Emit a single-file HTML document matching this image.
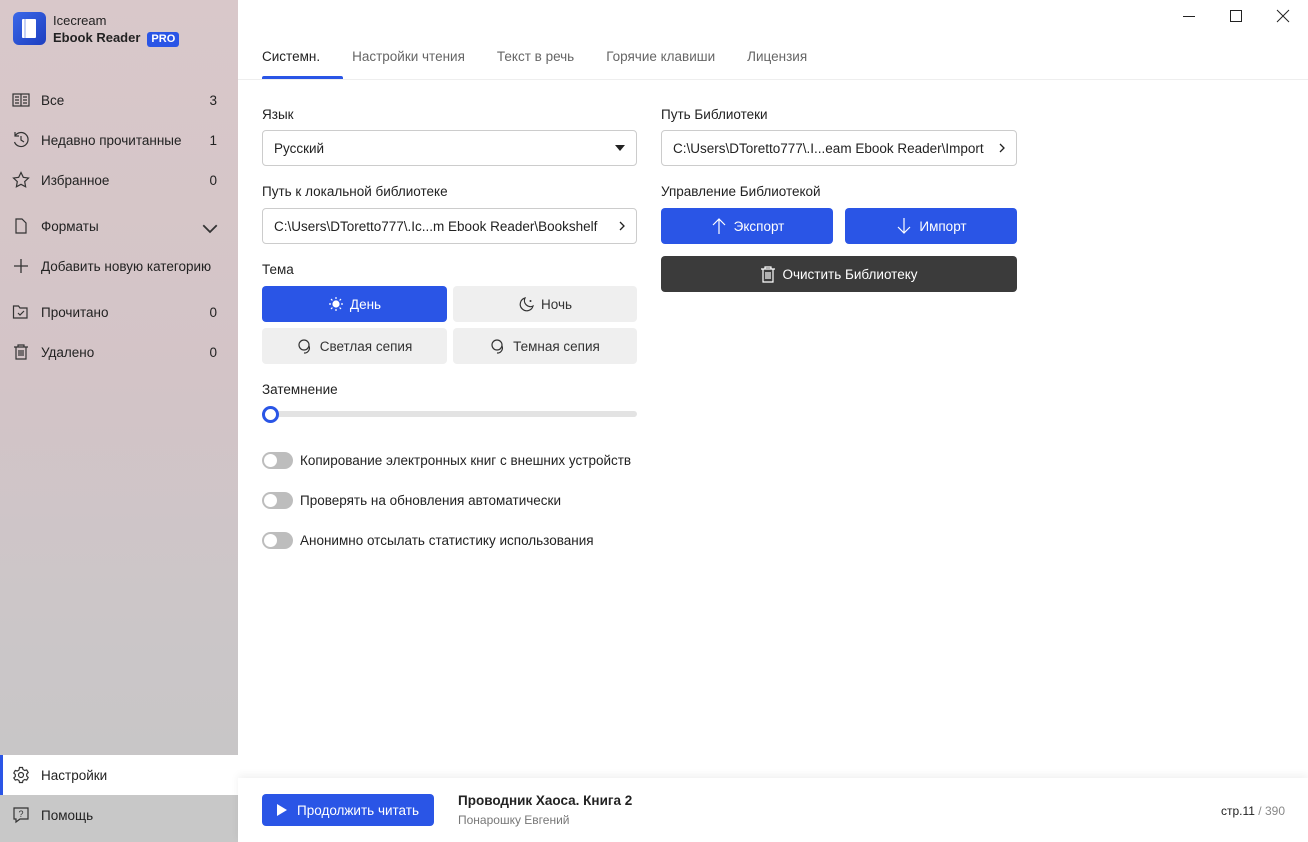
<!DOCTYPE html>
<html><head><meta charset="utf-8"><style>
*{box-sizing:border-box;margin:0;padding:0}
body{width:1308px;height:842px;overflow:hidden;font-family:"Liberation Sans","Noto Sans CJK SC",sans-serif;font-size:13.5px;color:#222;background:#fff;position:relative}
.side{position:absolute;left:0;top:0;width:238px;height:842px;background:linear-gradient(180deg,#d9c8ca 0%,#d3c4c7 45%,#cbc6c8 75%,#c6c6c6 100%)}
.logo{position:absolute;left:13px;top:12px;width:33px;height:33px;border-radius:6px;background:linear-gradient(135deg,#3a68e8,#1d3fc0)}
.logo i{position:absolute;left:9px;top:7px;width:14px;height:19px;background:#fff;border-radius:1px}
.logo b{position:absolute;left:11px;top:7px;width:2px;height:19px;background:#c5d2f5}
.brand{position:absolute;left:53px;top:12px;font-size:13px;line-height:17px}
.pro{display:inline-block;background:#2a55e6;color:#fff;font-weight:bold;font-size:11px;padding:1px 4px;border-radius:3px;margin-left:7px;line-height:13px}
.it{position:absolute;left:0;width:238px;height:40px;display:flex;align-items:center;padding-left:12px;font-size:13.5px}
.it svg{width:18px;height:18px;margin-right:11px;flex:none}
.it .n{position:absolute;right:21px}
.main{position:absolute;left:238px;top:0;right:0;bottom:0}
.tabs{position:absolute;left:24px;top:49px;display:flex;font-size:13.5px;color:#666}
.tabs span{margin-right:32px}
.tabs .a{color:#222}
.ul{position:absolute;left:24px;top:76px;width:81px;height:3px;background:#2a55e6;border-radius:2px 2px 0 0}
.hr{position:absolute;left:0;right:0;top:79px;height:1px;background:#eee}
.lbl{position:absolute;font-size:13.5px}
.box{position:absolute;height:36px;border:1px solid #ccc;border-radius:4px;display:flex;align-items:center;padding-left:11px;font-size:13.5px}
.box .r{position:absolute;right:9px;top:10px}
.btn{position:absolute;height:36px;border-radius:4px;display:flex;align-items:center;justify-content:center;font-size:13.5px}
.btn svg{margin-right:6px}
.blue{background:#2a55e6;color:#fff}
.gray{background:#efefef;color:#333}
.tg{position:absolute;left:24px;width:31px;height:17px;border-radius:9px;background:#bdbdbd}
.tg:after{content:"";position:absolute;left:2px;top:2px;width:13px;height:13px;border-radius:50%;background:#fff}
.tl{position:absolute;left:62px;font-size:13.5px}
.win{position:absolute;top:9px;font-size:14px;color:#222}
</style></head><body>
<div class="side">
<div class="logo"><i></i><b></b></div>
<div class="brand">Icecream<br><b style="font-weight:bold">Ebook Reader</b><span class="pro">PRO</span></div>
<div class="it" style="top:80px"><svg viewBox="0 0 18 18" fill="none" stroke="#333" stroke-width="1.2"><rect x="1" y="3" width="16" height="12"/><line x1="9" y1="3" x2="9" y2="15"/><path d="M3 6h4M3 9h4M3 12h4M11 6h4M11 9h4M11 12h4"/></svg>Все<span class="n">3</span></div>
<div class="it" style="top:120px"><svg viewBox="0 0 18 18" fill="none" stroke="#333" stroke-width="1.2"><path d="M3 5A7 7 0 1 1 2.5 11"/><path d="M3 1v4h4"/><path d="M9 5v4l3 2"/></svg>Недавно прочитанные<span class="n">1</span></div>
<div class="it" style="top:160px"><svg viewBox="0 0 18 18" fill="none" stroke="#333" stroke-width="1.2"><path d="M9 1.5l2.3 4.8 5.2.7-3.8 3.6.9 5.2L9 13.3l-4.6 2.5.9-5.2L1.5 7l5.2-.7z"/></svg>Избранное<span class="n">0</span></div>
<div class="it" style="top:206px"><svg viewBox="0 0 18 18" fill="none" stroke="#333" stroke-width="1.2"><path d="M4 2h6l4 4v10H4z"/></svg>Форматы<span class="n" style="right:19px;top:14px"><svg viewBox="0 0 12 12" width="12" height="12" fill="none" stroke="#333" stroke-width="1.2" style="margin:0"><path d="M1.5 3.5l4.5 4.5 4.5-4.5"/></svg></span></div>
<div class="it" style="top:246px"><svg viewBox="0 0 18 18" fill="none" stroke="#333" stroke-width="1.3"><path d="M9 2v14M2 9h14"/></svg>Добавить новую категорию</div>
<div class="it" style="top:292px"><svg viewBox="0 0 18 18" fill="none" stroke="#333" stroke-width="1.2"><path d="M1.5 3h5l1.5 2h7v10h-13.5z"/><path d="M6 10l2 2 4-4"/></svg>Прочитано<span class="n">0</span></div>
<div class="it" style="top:332px"><svg viewBox="0 0 18 18" fill="none" stroke="#333" stroke-width="1.2"><path d="M2 4h14M6 4V2h6v2M4 4v12h10V4M7 7v6M9 7v6M11 7v6"/></svg>Удалено<span class="n">0</span></div>
<div class="it" style="top:755px;background:#fff;border-left:3px solid #2a55e6;padding-left:9px"><svg viewBox="0 0 18 18" fill="none" stroke="#333" stroke-width="1.2"><circle cx="9" cy="9" r="2.5"/><path d="M7.5 1.5h3l.5 2 1.7 1 2-.6 1.5 2.6-1.5 1.5v2l1.5 1.5-1.5 2.6-2-.6-1.7 1-.5 2h-3l-.5-2-1.7-1-2 .6L1.8 12l1.5-1.5v-2L1.8 7l1.5-2.6 2 .6 1.7-1z"/></svg>Настройки</div>
<div style="position:absolute;left:0;top:795px;width:238px;height:47px;background:#c8c8c8"></div>
<div class="it" style="top:795px"><svg viewBox="0 0 18 18" fill="none" stroke="#333" stroke-width="1.2"><path d="M2 2h14v11H8l-4 3v-3H2z"/><text x="9" y="11" font-size="9" text-anchor="middle" fill="#333" stroke="none" font-family="Liberation Sans">?</text></svg>Помощь</div>
</div>
<div class="main">
<div class="win" style="left:944px"><svg width="14" height="14"><path d="M1 7.5h12" stroke="#222"/></svg></div>
<div class="win" style="left:991px"><svg width="14" height="14"><rect x="1.5" y="1.5" width="11" height="11" fill="none" stroke="#222"/></svg></div>
<div class="win" style="left:1038px"><svg width="14" height="14"><path d="M1 1l12 12M13 1L1 13" stroke="#222"/></svg></div>
<div class="tabs"><span class="a">Системн.</span><span>Настройки чтения</span><span>Текст в речь</span><span>Горячие клавиши</span><span>Лицензия</span></div>
<div class="ul"></div><div class="hr"></div>

<div class="lbl" style="left:24px;top:107px">Язык</div>
<div class="box" style="left:24px;top:130px;width:375px">Русский<span class="r" style="top:14px;right:11px;border-left:5px solid transparent;border-right:5px solid transparent;border-top:6px solid #222"></span></div>
<div class="lbl" style="left:24px;top:184px">Путь к локальной библиотеке</div>
<div class="box" style="left:24px;top:208px;width:375px">C:\Users\DToretto777\.Ic...m Ebook Reader\Bookshelf<span class="r"><svg width="10" height="14"><path d="M3 3l4 4-4 4" fill="none" stroke="#222" stroke-width="1.3"/></svg></span></div>
<div class="lbl" style="left:24px;top:262px">Тема</div>
<div class="btn blue" style="left:24px;top:286px;width:185px"><svg width="16" height="16" viewBox="0 0 16 16" fill="none" stroke="#fff" stroke-width="1.2"><circle cx="8" cy="8" r="3" fill="#fff"/><path d="M8 1v2M8 13v2M1 8h2M13 8h2M3 3l1.4 1.4M11.6 11.6L13 13M3 13l1.4-1.4M11.6 4.4L13 3"/></svg>День</div>
<div class="btn gray" style="left:215px;top:286px;width:184px"><svg width="17" height="17" viewBox="0 0 17 17" fill="none" stroke="#333" stroke-width="1.2"><path d="M7 2a6.5 6.5 0 1 0 8 8A6 6 0 0 1 7 2z"/><circle cx="12.5" cy="5" r="1" fill="#333" stroke="none"/></svg>Ночь</div>
<div class="btn gray" style="left:24px;top:328px;width:185px"><svg width="17" height="17" viewBox="0 0 17 17" fill="none" stroke="#333" stroke-width="1.2"><circle cx="7" cy="7" r="5"/><path d="M12 8a5 5 0 0 1-5 7"/></svg>Светлая сепия</div>
<div class="btn gray" style="left:215px;top:328px;width:184px"><svg width="17" height="17" viewBox="0 0 17 17" fill="none" stroke="#333" stroke-width="1.2"><circle cx="7" cy="7" r="5"/><path d="M12 8a5 5 0 0 1-5 7"/></svg>Темная сепия</div>
<div class="lbl" style="left:24px;top:382px">Затемнение</div>
<div style="position:absolute;left:24px;top:411px;width:375px;height:6px;border-radius:3px;background:#e3e3e3"></div>
<div style="position:absolute;left:24px;top:406px;width:17px;height:17px;border-radius:50%;border:3.5px solid #2a55e6;background:#fff"></div>
<div class="tg" style="top:452px"></div><div class="tl" style="top:453px">Копирование электронных книг с внешних устройств</div>
<div class="tg" style="top:492px"></div><div class="tl" style="top:493px">Проверять на обновления автоматически</div>
<div class="tg" style="top:532px"></div><div class="tl" style="top:533px">Анонимно отсылать статистику использования</div>

<div class="lbl" style="left:423px;top:107px">Путь Библиотеки</div>
<div class="box" style="left:423px;top:130px;width:356px">C:\Users\DToretto777\.I...eam Ebook Reader\Import<span class="r"><svg width="10" height="14"><path d="M3 3l4 4-4 4" fill="none" stroke="#222" stroke-width="1.3"/></svg></span></div>
<div class="lbl" style="left:423px;top:184px">Управление Библиотекой</div>
<div class="btn blue" style="left:423px;top:208px;width:172px"><svg width="18" height="18"><path d="M9 2v15M3 8l6-6 6 6" fill="none" stroke="#fff" stroke-width="1.2"/></svg>Экспорт</div>
<div class="btn blue" style="left:607px;top:208px;width:172px"><svg width="18" height="18"><path d="M9 1v15M3 10l6 6 6-6" fill="none" stroke="#fff" stroke-width="1.2"/></svg>Импорт</div>
<div class="btn" style="left:423px;top:256px;width:356px;background:#3b3b3b;color:#fff"><svg width="16" height="18"><path d="M1 4h14M5 4V2h6v2M3 4v13h10V4M6 7v7M8 7v7M10 7v7" fill="none" stroke="#fff" stroke-width="1.2"/></svg>Очистить Библиотеку</div>

<div style="position:absolute;left:0;right:0;top:778px;bottom:0;background:#fff;box-shadow:0 -3px 8px rgba(0,0,0,0.06)">
<div class="btn blue" style="left:24px;top:16px;width:172px;height:32px"><span style="border-top:6px solid transparent;border-bottom:6px solid transparent;border-left:10px solid #fff;margin-right:10px"></span>Продолжить читать</div>
<div style="position:absolute;left:220px;top:15px;font-weight:bold;font-size:13.5px">Проводник Хаоса. Книга 2</div>
<div style="position:absolute;left:220px;top:35px;font-size:12px;color:#777">Понарошку Евгений</div>
<div style="position:absolute;right:23px;top:26px;font-size:12px">стр.11 <span style="color:#888">/ 390</span></div>
</div>
</div>
</body></html>
